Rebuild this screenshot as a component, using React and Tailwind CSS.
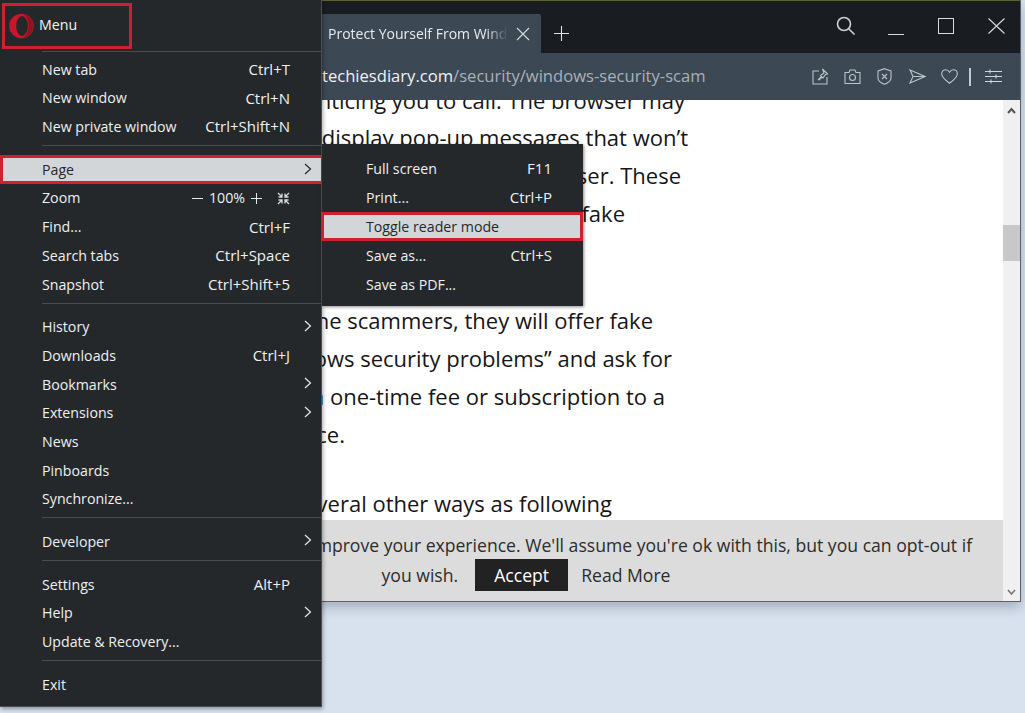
function Chevron() {
  return (
    <svg width="8" height="12" viewBox="0 0 8 12" fill="none" stroke="#e6e8ea" strokeWidth="1.2" className="absolute right-[9px] top-[7px]">
      <path d="M1 1l5.5 5L1 11" />
    </svg>
  );
}

function Row({ label, shortcut, arrow }) {
  return (
    <div className="relative flex h-[28.7px] items-center justify-between pl-[42px] pr-[31px] text-[14.2px] text-[#eef0f1]">
      <span>{label}</span>
      {shortcut && <span className="text-[15px]">{shortcut}</span>}
      {arrow && <Chevron />}
    </div>
  );
}

function Sep() {
  return (
    <div className="h-[14px] pl-[42px] pt-1">
      <div className="h-px bg-[#494d51]" />
    </div>
  );
}

function OperaLogo() {
  return (
    <svg width="25" height="26" viewBox="0 0 25 26">
      <circle cx="12.5" cy="13" r="12.3" fill="#c8162a" />
      <path d="M12.5 1a12 12 0 0 1 0 24c3 0 7-4 7-12s-4-12-7-12z" fill="#8f1420" />
      <ellipse cx="13" cy="13" rx="5.8" ry="10" fill="#25282a" />
    </svg>
  );
}

function MainMenu() {
  return (
    <div className="absolute left-0 top-0 z-10 h-[707px] w-[322px] border-r border-b border-[#4b4f53] bg-[#25282a] shadow-[1px_2px_4px_rgba(0,0,0,0.35)]">
      <div className="relative flex h-[51px] items-center gap-[5px] pl-[9px] text-[14.2px] text-[#f2f3f4]">
        <OperaLogo />
        <span className="-mt-[2px]">Menu</span>
        <div className="absolute left-[2px] top-[3px] h-[46px] w-[130px] border-[3px] border-[#cf2030]" />
      </div>
      <div className="ml-[42px] mb-[3px] h-px bg-[#494d51]" />
      <Row label="New tab" shortcut="Ctrl+T" />
      <Row label="New window" shortcut="Ctrl+N" />
      <Row label="New private window" shortcut="Ctrl+Shift+N" />
      <Sep />
      <div className="relative flex h-[28.7px] items-center bg-[#d3d6d8] pl-[42px] text-[14.2px] text-[#26292b]">
        <span>Page</span>
        <svg width="8" height="12" viewBox="0 0 8 12" fill="none" stroke="#26292b" strokeWidth="1.2" className="absolute right-[9px] top-[8px]">
          <path d="M1 1l5.5 5L1 11" />
        </svg>
        <div className="absolute left-0 top-0 h-full w-[325px] border-[3px] border-[#cf2030]" />
      </div>
      <div className="flex h-[28.7px] items-center justify-between pl-[42px] pr-[31px] text-[14.2px] text-[#eef0f1]">
        <span>Zoom</span>
        <div className="flex items-center">
          <svg width="11" height="11" viewBox="0 0 11 11" stroke="#e6e8ea"><path d="M0 5.5h11" /></svg>
          <span className="ml-[6px]">100%</span>
          <svg width="11" height="11" viewBox="0 0 11 11" stroke="#e6e8ea" className="ml-[6px]"><path d="M0 5.5h11M5.5 0v11" /></svg>
          <svg width="13" height="13" viewBox="0 0 13 13" fill="none" stroke="#d5d8da" strokeWidth="1.3" className="ml-[15px]">
            <path d="M1 1l3.5 3.5M12 1L8.5 4.5M1 12l3.5-3.5M12 12L8.5 8.5M1.5 5h3.5V1.5M11.5 5H8V1.5M1.5 8H5v3.5M11.5 8H8v3.5" />
          </svg>
        </div>
      </div>
      <Row label="Find..." shortcut="Ctrl+F" />
      <Row label="Search tabs" shortcut="Ctrl+Space" />
      <Row label="Snapshot" shortcut="Ctrl+Shift+5" />
      <Sep />
      <Row label="History" arrow />
      <Row label="Downloads" shortcut="Ctrl+J" />
      <Row label="Bookmarks" arrow />
      <Row label="Extensions" arrow />
      <Row label="News" />
      <Row label="Pinboards" />
      <Row label="Synchronize..." />
      <Sep />
      <Row label="Developer" arrow />
      <Sep />
      <Row label="Settings" shortcut="Alt+P" />
      <Row label="Help" arrow />
      <Row label="Update & Recovery..." />
      <Sep />
      <Row label="Exit" />
    </div>
  );
}

function SubRow({ label, shortcut }) {
  return (
    <div className="flex h-[29px] items-center justify-between pl-[44px] pr-[31px] text-[14.2px] text-[#eef0f1]">
      <span>{label}</span>
      {shortcut && <span className="text-[15px]">{shortcut}</span>}
    </div>
  );
}

function PageSubmenu() {
  return (
    <div className="absolute left-[322px] top-[144px] z-20 h-[162px] w-[261px] bg-[#25282a] pt-[10px] shadow-[1px_1px_3px_rgba(0,0,0,0.45)]">
      <SubRow label="Full screen" shortcut="F11" />
      <SubRow label="Print..." shortcut="Ctrl+P" />
      <div className="relative flex h-[29px] items-center bg-[#d3d6d8] pl-[44px] text-[14.2px] text-[#26292b]">
        <span>Toggle reader mode</span>
        <div className="absolute -left-[1px] top-0 h-full w-[262px] border-[3px] border-[#cf2030]" />
      </div>
      <SubRow label="Save as..." shortcut="Ctrl+S" />
      <SubRow label="Save as PDF..." />
    </div>
  );
}

function TabStrip() {
  return (
    <div className="flex h-[53px] border-t border-[#5c6136] bg-[#191d22]">
      <div className="ml-[322px] mt-[13px] flex h-[39px] w-[219px] items-center rounded-tr-[2px] bg-[#3c4854] pl-[6px]">
        <span className="w-[180px] overflow-hidden whitespace-nowrap text-[14px] text-[#e8eaec] [mask-image:linear-gradient(to_right,black_88%,transparent)]">
          Protect Yourself From Windows Security Scam
        </span>
        <svg width="14" height="14" viewBox="0 0 14 14" stroke="#d8dbde" strokeWidth="1.1" className="ml-[8px]">
          <path d="M1 1l12 12M13 1L1 13" />
        </svg>
      </div>
      <div className="flex h-[52px] w-[40px] items-center justify-center pt-[13px]">
        <svg width="15" height="15" viewBox="0 0 15 15" stroke="#dfe1e3" strokeWidth="1.1">
          <path d="M0 7.5h15M7.5 0v15" />
        </svg>
      </div>
      <div className="ml-auto -mr-[1px] flex">
        <div className="flex h-[50px] w-[50px] items-center justify-center">
          <svg width="20" height="20" viewBox="0 0 20 20" fill="none" stroke="#cfd2d5" strokeWidth="1.6">
            <circle cx="8" cy="8" r="6.5" />
            <path d="M12.7 12.7l5.8 5.8" />
          </svg>
        </div>
        <div className="flex h-[50px] w-[50px] items-center justify-center">
          <svg width="16" height="16" viewBox="0 0 16 16" stroke="#d8dbde" className="mt-[3px]">
            <path d="M0 14.5h16" />
          </svg>
        </div>
        <div className="flex h-[50px] w-[50px] items-center justify-center">
          <svg width="16" height="16" viewBox="0 0 16 16" fill="none" stroke="#d8dbde">
            <rect x="0.5" y="0.5" width="15" height="15" />
          </svg>
        </div>
        <div className="flex h-[50px] w-[50px] items-center justify-center">
          <svg width="17" height="16" viewBox="0 0 17 16" stroke="#d8dbde" strokeWidth="1.1">
            <path d="M0.5 0.5l16 15M16.5 0.5l-16 15" />
          </svg>
        </div>
      </div>
    </div>
  );
}

function AddressBar() {
  return (
    <div className="flex h-[47px] items-center bg-[#3c4854]">
      <div className="ml-[322px] whitespace-nowrap text-[16.6px] text-[#a9b1b9]">
        <span className="text-[#f0f2f3]">techiesdiary.com</span>/security/windows-security-scam
      </div>
      <div className="ml-auto flex items-center pr-[7px] text-[#bcc3ca]">
        <div className="flex w-[32px] justify-center">
          <svg width="17" height="17" viewBox="0 0 17 17" fill="none" stroke="currentColor" strokeWidth="1.1">
            <path d="M7 3H1v13h14V9" />
            <path d="M10.5 1l5 5-2 .5-2.5 3.5-1 -1-3 3-.5-.5 3-3-1-1 3.5-2.5z" />
          </svg>
        </div>
        <div className="flex w-[32px] justify-center">
          <svg width="17" height="15" viewBox="0 0 17 15" fill="none" stroke="currentColor" strokeWidth="1.1">
            <path d="M1 3.5h4l1-2.5h5l1 2.5h4v11H1z" />
            <circle cx="8.5" cy="8.5" r="3" />
          </svg>
        </div>
        <div className="flex w-[33px] justify-center">
          <svg width="15" height="17" viewBox="0 0 15 17" fill="none" stroke="currentColor" strokeWidth="1.1">
            <path d="M7.5 0.7l6.5 2.3v7c0 3-3 5-6.5 6.3C4 15 1 13 1 10V3z" />
            <path d="M5 6l5 5M10 6l-5 5" />
          </svg>
        </div>
        <div className="flex w-[33px] justify-center">
          <svg width="17" height="15" viewBox="0 0 17 15" fill="none" stroke="currentColor" strokeWidth="1.1">
            <path d="M1 1l15 6.5L1 14l3-6.5zM4 7.5h12" />
          </svg>
        </div>
        <div className="flex w-[31px] justify-center">
          <svg width="17" height="15" viewBox="0 0 17 15" fill="none" stroke="currentColor" strokeWidth="1.1">
            <path d="M8.5 14.3C4 11 .7 8 .7 4.8.7 2.4 2.5.8 4.6.8c1.6 0 3 .9 3.9 2.4C9.4 1.7 10.8.8 12.4.8c2.1 0 3.9 1.6 3.9 4 0 3.2-3.3 6.2-7.8 9.5z" />
          </svg>
        </div>
        <div className="flex w-[9px] justify-center">
          <div className="h-[18px] w-[2px] bg-[#c4cad0]" />
        </div>
        <div className="flex w-[39px] justify-center">
          <svg width="17" height="15" viewBox="0 0 17 15" stroke="#d0d5d9" strokeWidth="1.1">
            <path d="M0 2.5h17M0 7.5h17M0 12.5h17M5 0.5v4M11 5.5v4M6 10.5v4" />
          </svg>
        </div>
      </div>
    </div>
  );
}

const articleLines = [
  { text: "enticing you to call. The browser may", className: "w-[685px]" },
  { text: "display pop-up messages that won’t", className: "w-[688px]" },
  { text: "browser. These", className: "w-[681px]" },
  { text: "fake", className: "w-[625px] mb-[69.5px]" },
  { text: "the scammers, they will offer fake", className: "w-[653px]" },
  { text: "windows security problems” and ask for", className: "w-[672px]" },
  { text: "a one-time fee or subscription to a", className: "w-[665px]" },
  { text: "service.", className: "w-[345px] mb-[31.5px]" },
  { text: "several other ways as following", className: "w-[612px]" },
];

function ScrollBar() {
  return (
    <div className="flex w-[17px] flex-col items-center bg-[#f0f0f0]">
      <div className="flex h-[20px] items-center justify-center">
        <svg width="9" height="7" viewBox="0 0 9 7" fill="none" stroke="#555" strokeWidth="2"><path d="M1 6l3.5-4L8 6" /></svg>
      </div>
      <div className="mt-[105px] h-[36px] w-full bg-[#c8c8c8]" />
      <div className="flex-1" />
      <div className="flex h-[18px] items-center justify-center">
        <svg width="9" height="7" viewBox="0 0 9 7" fill="none" stroke="#777" strokeWidth="1.6"><path d="M1 1l3.5 4L8 1" /></svg>
      </div>
    </div>
  );
}

function PageContent() {
  return (
    <div className="flex h-[501px] bg-white">
      <div className="flex min-w-0 flex-1 flex-col">
        <div className="h-[420px] overflow-hidden text-[22px] leading-[37.8px] text-[#161616]">
          <div className="-mt-[18.5px]">
            {articleLines.map((line) => (
              <p key={line.text} className={`whitespace-nowrap text-right ${line.className}`}>
                {line.text}
              </p>
            ))}
          </div>
        </div>
        <div className="flex h-[81px] flex-col items-center bg-[#dcdcdc] pl-[45px] pt-[10px] text-[17.6px] text-[#2c2c2c]">
          <div className="whitespace-nowrap leading-[30px]">
            This website uses cookies to improve your experience. We'll assume you're ok with this, but you can opt-out if
          </div>
          <div className="mt-[-1px] flex items-center pl-[4px]">
            <span>you wish.</span>
            <span className="ml-[17px] flex h-[32px] w-[93px] items-center justify-center bg-[#222222] text-white">Accept</span>
            <span className="ml-[13px]">Read More</span>
          </div>
        </div>
      </div>
      <ScrollBar />
    </div>
  );
}

export default function App() {
  return (
    <div className="relative h-[713px] w-[1025px] overflow-hidden bg-[#d8e2ef] font-['Open_Sans',sans-serif]">
      <div className="h-[602px] w-[1021px] border-r border-b border-[#5a6066] shadow-[0_5px_12px_rgba(40,50,70,0.3)]">
        <TabStrip />
        <AddressBar />
        <PageContent />
      </div>
      <MainMenu />
      <PageSubmenu />
    </div>
  );
}
